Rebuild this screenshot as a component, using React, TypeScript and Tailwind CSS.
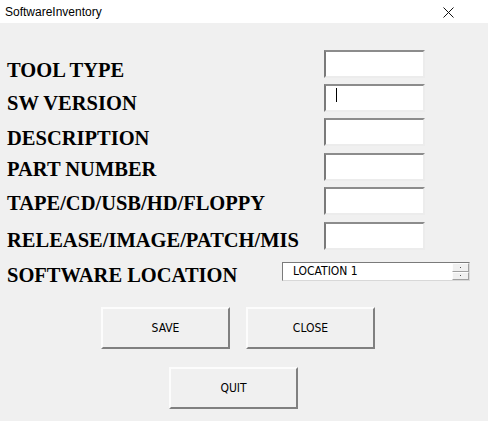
import { useState } from "react";

const labelFont = { fontFamily: '"Liberation Serif", "Times New Roman", serif' };
const uiFont = { fontFamily: '"DejaVu Sans Condensed", "Liberation Sans", Arial, sans-serif' };

interface Row {
  label: string;
  height: string;
  labelPad: string;
  caret?: boolean;
}

const rows: Row[] = [
  { label: "TOOL TYPE", height: "h-[34px]", labelPad: "pt-[9.5px]" },
  { label: "SW VERSION", height: "h-[34px]", labelPad: "pt-[9px]", caret: true },
  { label: "DESCRIPTION", height: "h-[34.5px]", labelPad: "pt-[10px]" },
  { label: "PART NUMBER", height: "h-[34.5px]", labelPad: "pt-[6.5px]" },
  { label: "TAPE/CD/USB/HD/FLOPPY", height: "h-[34.5px]", labelPad: "pt-[6px]" },
  { label: "RELEASE/IMAGE/PATCH/MIS", height: "h-[40.5px]", labelPad: "pt-[8px]" },
];

function TextBox({ caret }: { caret?: boolean }) {
  return (
    <div className="relative w-[101px] h-[28px] bg-white border-2 border-t-[#8c8c8c] border-l-[#7a7a7a] border-b-[#ececec] border-r-[#ececec]">
      {caret && <div className="absolute left-[10px] top-[2px] w-px h-[14px] bg-black" />}
    </div>
  );
}

function WinButton({ text }: { text: string }) {
  return (
    <button
      className="w-[129px] h-[42px] bg-[#f0f0f0] border-2 border-t-[#fcfcfc] border-l-[#fcfcfc] border-b-[#808080] border-r-[#808080] text-[12px] text-black"
      style={uiFont}
    >
      {text}
    </button>
  );
}

export default function App() {
  const [location] = useState("LOCATION 1");

  return (
    <div className="w-[488px] h-[421px] bg-[#f0f0f0] overflow-hidden">
      {/* title bar */}
      <div className="h-[23px] bg-white flex items-center justify-between pl-[5px] pr-[34px]">
        <span className="text-[12px] text-black" style={{ fontFamily: '"Liberation Sans", Arial, sans-serif' }}>
          SoftwareInventory
        </span>
        <svg width="11" height="11" viewBox="0 0 11 11" className="mt-px">
          <path d="M0.5 0.5 L10.5 10.5 M10.5 0.5 L0.5 10.5" stroke="#111" strokeWidth="1" />
        </svg>
      </div>

      <div className="pt-[27px] pl-[7px]">
        {rows.map((r) => (
          <div key={r.label} className={`flex items-start ${r.height}`}>
            <div
              className={`w-[317px] text-[20.5px] leading-[20px] font-bold text-black whitespace-nowrap ${r.labelPad}`}
              style={labelFont}
            >
              {r.label}
            </div>
            <TextBox caret={r.caret} />
          </div>
        ))}

        <div className="flex items-start h-[19px]">
          <div className="w-[275px] pt-[2.5px] text-[20.5px] leading-[20px] font-bold text-black whitespace-nowrap" style={labelFont}>
            SOFTWARE LOCATION
          </div>
          <div className="flex w-[188px] h-[19px] bg-white border border-t-[#7a7a7a] border-l-[#7a7a7a] border-b-[#d8d8d8] border-r-[#d8d8d8]">
            <div className="flex-1 pl-[10px] text-[12px] leading-[17px] text-black" style={uiFont}>
              {location}
            </div>
            <div className="w-[17px] flex flex-col">
              <div className="flex-1 bg-[#f0f0f0] border border-t-[#fdfdfd] border-l-[#fdfdfd] border-b-[#a0a0a0] border-r-[#a0a0a0] flex items-center justify-center">
                <div className="w-px h-px bg-[#555]" />
              </div>
              <div className="flex-1 bg-[#f0f0f0] border border-t-[#fdfdfd] border-l-[#fdfdfd] border-b-[#a0a0a0] border-r-[#a0a0a0] flex items-center justify-center">
                <div className="w-px h-px bg-[#555]" />
              </div>
            </div>
          </div>
        </div>

        <div className="flex gap-[16px] mt-[26px] pl-[94px]">
          <WinButton text="SAVE" />
          <WinButton text="CLOSE" />
        </div>

        <div className="mt-[18px] pl-[162px]">
          <WinButton text="QUIT" />
        </div>
      </div>
    </div>
  );
}
